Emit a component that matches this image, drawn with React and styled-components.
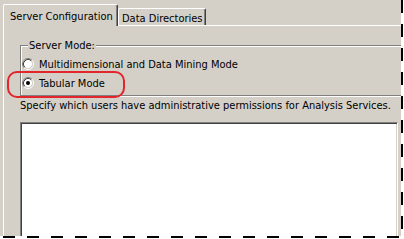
import React from 'react';
import styled, { createGlobalStyle } from 'styled-components';

const GlobalStyle = createGlobalStyle`
  html, body {
    margin: 0;
    padding: 0;
    background: #fff;
  }
  body {
    font-family: "DejaVu Sans Condensed", "DejaVu Sans", Tahoma, sans-serif;
    font-size: 11px;
    color: #000;
  }
`;

// torn edge: dashed black lines on the right and bottom
const Page = styled.div`
  position: relative;
  width: 404px;
  height: 239px;
  overflow: hidden;
  background:
    repeating-linear-gradient(to bottom, #000 0 13px, transparent 13px 24px) 401px 0 / 2px 236px no-repeat,
    repeating-linear-gradient(to right, transparent 0 3px, #000 3px 15px, transparent 15px 24px) 0 236px / 404px 2px no-repeat,
    #fff;
`;

const Frame = styled.div`
  width: 401px;
  height: 236px;
  overflow: hidden;
  box-sizing: border-box;
  padding: 4px 0 0 3px;
  background: #d4d0c8;
  display: flex;
  flex-direction: column;
`;

const TabStrip = styled.div`
  display: flex;
  align-items: flex-end;
  height: 21px;
`;

const Tab = styled.div`
  position: relative;
  box-sizing: border-box;
  height: ${(p) => (p.$active ? '22px' : '17px')};
  margin-bottom: ${(p) => (p.$active ? '-1px' : '0')};
  z-index: ${(p) => (p.$active ? 1 : 0)};
  width: ${(p) => p.$w}px;
  padding: ${(p) => (p.$active ? '5px 0 0 6px' : '3px 0 0 3px')};
  background: #d4d0c8;
  border-top: 1px solid #fff;
  border-left: 1px solid #fff;
  border-right: 1px solid #404040;
  box-shadow: inset -1px 0 0 #808080;
  border-radius: 2px 2px 0 0;
  line-height: 13px;
  white-space: nowrap;
`;

const Panel = styled.div`
  flex: 1;
  border-top: 1px solid #fff;
  border-left: 1px solid #fff;
  padding: 19px 0 0 16px;
  display: flex;
  flex-direction: column;
`;

const GroupBox = styled.div`
  position: relative;
  box-sizing: border-box;
  height: 51px;
  margin-right: -40px;
  border: 1px solid #808080;
  box-shadow: inset 1px 1px 0 #fff, 1px 1px 0 #fff;
  padding: 12px 0 0 1px;
  display: flex;
  flex-direction: column;
  gap: 7px;
`;

const Legend = styled.span`
  position: absolute;
  top: -7px;
  left: 7px;
  padding: 0 1px;
  background: #d4d0c8;
  line-height: 13px;
`;

const RadioRow = styled.label`
  display: flex;
  align-items: center;
  gap: 5px;
  height: 12px;
  line-height: 13px;
  white-space: nowrap;
`;

const Hint = styled.div`
  margin-top: 3px;
  line-height: 13px;
  white-space: nowrap;
`;

const ListBox = styled.div`
  margin-top: 10px;
  flex: 1;
  margin-right: 3px;
  margin-bottom: -20px;
  background: #fff;
  border-top: 1px solid #808080;
  border-left: 1px solid #808080;
  border-right: 1px solid #fff;
  box-shadow: inset 1px 1px 0 #404040, inset -1px 0 0 #d4d0c8;
`;

// red annotation marker drawn over the dialog
const Highlight = styled.div`
  position: absolute;
  left: 7px;
  top: 71px;
  width: 118px;
  height: 27px;
  box-sizing: border-box;
  border: 2px solid #e3262b;
  border-radius: 10px;
`;

const Radio = ({ checked }) => (
  <svg width="12" height="12" viewBox="0 0 12 12">
    <circle cx="6" cy="6" r="4.2" fill="#fff" />
    <path d="M2.11 9.89 A5.5 5.5 0 0 1 9.89 2.11" fill="none" stroke="#808080" strokeWidth="1" />
    <path d="M9.89 2.11 A5.5 5.5 0 0 1 2.11 9.89" fill="none" stroke="#fff" strokeWidth="1" />
    <path d="M2.82 9.18 A4.5 4.5 0 0 1 9.18 2.82" fill="none" stroke="#404040" strokeWidth="1" />
    <path d="M9.18 2.82 A4.5 4.5 0 0 1 2.82 9.18" fill="none" stroke="#d4d0c8" strokeWidth="1" />
    {checked && <circle cx="6" cy="6" r="2" fill="#000" />}
  </svg>
);

const App = () => (
  <>
    <GlobalStyle />
    <Page>
      <Frame>
        <TabStrip>
          <Tab $active $w={115}>Server Configuration</Tab>
          <Tab $w={88}>Data Directories</Tab>
        </TabStrip>
        <Panel>
          <GroupBox>
            <Legend>Server Mode:</Legend>
            <RadioRow>
              <Radio />
              Multidimensional and Data Mining Mode
            </RadioRow>
            <RadioRow>
              <Radio checked />
              Tabular Mode
            </RadioRow>
          </GroupBox>
          <Hint>Specify which users have administrative permissions for Analysis Services.</Hint>
          <ListBox />
        </Panel>
      </Frame>
      <Highlight />
    </Page>
  </>
);

export default App;
